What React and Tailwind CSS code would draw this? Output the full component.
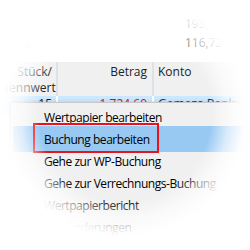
import React from 'react'

const items = [
  'Wertpapier bearbeiten',
  'Buchung bearbeiten',
  'Gehe zur WP-Buchung',
  'Gehe zur Verrechnungs-Buchung',
  'Wertpapierbericht',
  'Kursänderungen',
]

export default function App() {
  return (
    <div className="relative h-[250px] w-[250px] overflow-hidden bg-white font-['Segoe_UI','Open_Sans',sans-serif] text-[12px] text-[#1a1a1a]">
      <div className="flex h-[62px] justify-between">
        <div className="pl-[17px] pt-[34px] text-[#555]">e):</div>
        <div className="w-[65px] pt-[14px] leading-[19px] text-[#555]">
          <div>193,45 €</div>
          <div>116,72 €</div>
        </div>
      </div>

      <div className="flex h-[34px] bg-[#f0f0f0] leading-[16px] text-[#222]">
        <div className="w-[58px] border-r-2 border-[#dbe2e8] pr-[4px] pt-[2px] text-right">
          Stück/<br />Nennwert
        </div>
        <div className="w-[96px] border-r-2 border-[#dbe2e8] pr-[5px] pt-[2px] text-right">Betrag</div>
        <div className="flex-1 pl-[4px] pt-[2px]">Konto</div>
      </div>

      <div className="flex h-[20px] bg-[#cce8ff] leading-[16px]">
        <div className="w-[58px] border-r-2 border-white pr-[4px] text-right">15</div>
        <div className="w-[96px] border-r-2 border-white pr-[5px] text-right text-[#e01010]">-1.724,60</div>
        <div className="flex-1 pl-[4px] text-[#1a3a6a]">Gemeza Bank</div>
      </div>

      <div className="absolute left-[10px] top-[102px] w-[260px] border border-[#c8c8c8] bg-[#f0f0f0] pb-[6px] pt-[4px] tracking-[-0.45px] shadow-[0_0_4px_rgba(0,0,0,0.15)]">
        {items.map((label, i) => (
          <div key={label} className="relative h-[22px] leading-[22px] text-black">
            {i === 1 && <div className="absolute -top-[3px] bottom-[-1px] left-[2px] right-0 bg-[#98c9f3]" />}
            <span className="relative pl-[33px]">{label}</span>
          </div>
        ))}
        <div className="absolute left-[22px] top-[20px] h-[30px] w-[126px] border-2 border-[#e8141b]" />
      </div>

      <div className="pointer-events-none absolute inset-0 bg-[radial-gradient(circle_at_125px_115px,transparent_86px,rgba(255,255,255,0.65)_104px,rgba(255,255,255,0.95)_118px,#fff_124px)]" />
    </div>
  )
}
